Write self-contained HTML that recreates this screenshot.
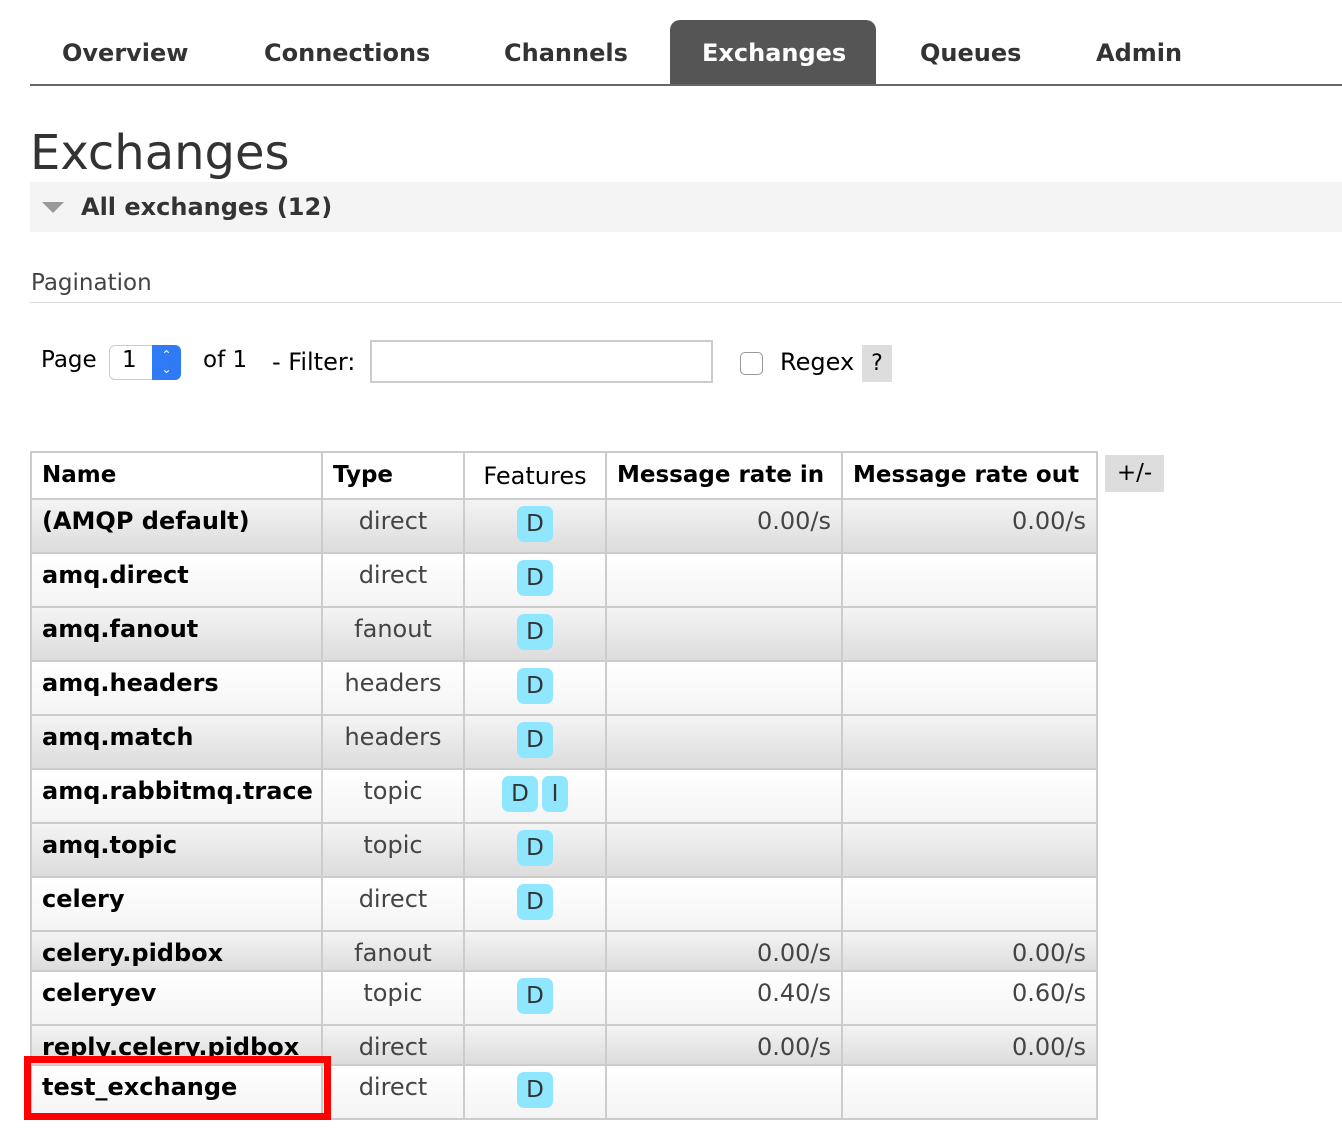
<!DOCTYPE html>
<html><head><meta charset="utf-8"><style>
body{margin:0;width:1342px;height:1146px;background:#fff;font-family:"DejaVu Sans","Liberation Sans",sans-serif;color:#000;position:relative;overflow:hidden}
.a{position:absolute;white-space:nowrap}
.nav{font-weight:bold;font-size:24px;color:#333;top:39px}
table{position:absolute;left:30px;top:451px;width:1066px;border-collapse:collapse;font-size:24px;table-layout:fixed}
td,th{border:2px solid #ccc;padding:7px 10px 0;vertical-align:top;box-sizing:border-box;white-space:nowrap;overflow:hidden}
th{height:47px;text-align:left;font-weight:bold;background:#fff;padding-top:9px;font-size:23px}
th.f{font-weight:normal;text-align:center;font-size:24px}
td.n{font-weight:bold}
td.t{text-align:center;color:#444}
td.f{text-align:center;padding-top:6px}
td.r{text-align:right;color:#444}
tr.g td{background:linear-gradient(#f4f4f4,#dcdcdc)}
tr.w td{background:linear-gradient(#fff,#f4f4f4)}
.b{display:inline-block;width:36px;height:36px;line-height:36px;border-radius:7px;background:#8ee6ff;color:#333;text-align:center;font-size:23px;margin:0 2px}
</style></head><body>
<div class="a nav" style="left:62px">Overview</div>
<div class="a nav" style="left:264px">Connections</div>
<div class="a nav" style="left:504px">Channels</div>
<div class="a" style="left:670px;top:20px;width:206px;height:65px;background:#555;border-radius:10px 10px 0 0"></div>
<div class="a nav" style="left:702px;color:#fff">Exchanges</div>
<div class="a nav" style="left:920px">Queues</div>
<div class="a nav" style="left:1096px">Admin</div>
<div class="a" style="left:30px;top:84px;width:1312px;height:2px;background:#666"></div>
<div class="a" style="left:30px;top:125px;font-size:48px;color:#333">Exchanges</div>
<div class="a" style="left:30px;top:182px;width:1312px;height:50px;background:#f4f4f4"></div>
<div class="a" style="left:42px;top:202px;width:0;height:0;border-left:11px solid transparent;border-right:11px solid transparent;border-top:11px solid #999"></div>
<div class="a" style="left:81px;top:193px;font-size:24px;font-weight:bold;color:#333">All exchanges (12)</div>
<div class="a" style="left:31px;top:270px;font-size:23px;color:#444">Pagination</div>
<div class="a" style="left:30px;top:302px;width:1312px;height:1px;background:#ddd"></div>
<div class="a" style="left:41px;top:347px;font-size:23px">Page</div>
<div class="a" style="left:109px;top:345px;width:70px;height:33px;border:1px solid #ccc;border-radius:6px;background:#fff"></div>
<div class="a" style="left:122px;top:347px;font-size:23px">1</div>
<div class="a" style="left:152px;top:345px;width:29px;height:35px;background:#2f7bf5;border-radius:0 6px 6px 0;color:#fff;font-size:12px;text-align:center;line-height:14px;padding-top:3px;box-sizing:border-box">&#8963;<br>&#8964;</div>
<div class="a" style="left:203px;top:347px;font-size:23px">of 1</div>
<div class="a" style="left:272px;top:348px;font-size:24px">- Filter:</div>
<div class="a" style="left:370px;top:340px;width:343px;height:43px;border:2px solid #ccc;box-sizing:border-box"></div>
<div class="a" style="left:740px;top:352px;width:23px;height:23px;border:1px solid #999;border-radius:5px;box-sizing:border-box"></div>
<div class="a" style="left:780px;top:348px;font-size:24px">Regex</div>
<div class="a" style="left:862px;top:345px;width:30px;height:37px;background:#ddd;font-size:22px;text-align:center;line-height:37px">?</div>
<div class="a" style="left:1105px;top:455px;width:59px;height:37px;background:#ddd;font-size:23px;text-align:center;line-height:37px">+/-</div>
<table>
<colgroup><col style="width:291px"><col style="width:142px"><col style="width:142px"><col style="width:236px"><col style="width:255px"></colgroup>
<tr><th>Name</th><th>Type</th><th class="f">Features</th><th>Message rate in</th><th>Message rate out</th></tr>
<tr class="g" style="height:54px"><td class="n">(AMQP default)</td><td class="t">direct</td><td class="f"><span class="b">D</span></td><td class="r">0.00/s</td><td class="r">0.00/s</td></tr>
<tr class="w" style="height:54px"><td class="n">amq.direct</td><td class="t">direct</td><td class="f"><span class="b">D</span></td><td></td><td></td></tr>
<tr class="g" style="height:54px"><td class="n">amq.fanout</td><td class="t">fanout</td><td class="f"><span class="b">D</span></td><td></td><td></td></tr>
<tr class="w" style="height:54px"><td class="n">amq.headers</td><td class="t">headers</td><td class="f"><span class="b">D</span></td><td></td><td></td></tr>
<tr class="g" style="height:54px"><td class="n">amq.match</td><td class="t">headers</td><td class="f"><span class="b">D</span></td><td></td><td></td></tr>
<tr class="w" style="height:54px"><td class="n">amq.rabbitmq.trace</td><td class="t">topic</td><td class="f"><span class="b">D</span><span class="b" style="width:26px">I</span></td><td></td><td></td></tr>
<tr class="g" style="height:54px"><td class="n">amq.topic</td><td class="t">topic</td><td class="f"><span class="b">D</span></td><td></td><td></td></tr>
<tr class="w" style="height:54px"><td class="n">celery</td><td class="t">direct</td><td class="f"><span class="b">D</span></td><td></td><td></td></tr>
<tr class="g" style="height:40px"><td class="n">celery.pidbox</td><td class="t">fanout</td><td class="f"></td><td class="r">0.00/s</td><td class="r">0.00/s</td></tr>
<tr class="w" style="height:54px"><td class="n">celeryev</td><td class="t">topic</td><td class="f"><span class="b">D</span></td><td class="r">0.40/s</td><td class="r">0.60/s</td></tr>
<tr class="g" style="height:40px"><td class="n">reply.celery.pidbox</td><td class="t">direct</td><td class="f"></td><td class="r">0.00/s</td><td class="r">0.00/s</td></tr>
<tr class="w" style="height:54px"><td class="n">test_exchange</td><td class="t">direct</td><td class="f"><span class="b">D</span></td><td></td><td></td></tr>
</table>
<div class="a" style="left:24px;top:1056px;width:307px;height:64px;border:7px solid #f00;box-sizing:border-box"></div>
</body></html>
